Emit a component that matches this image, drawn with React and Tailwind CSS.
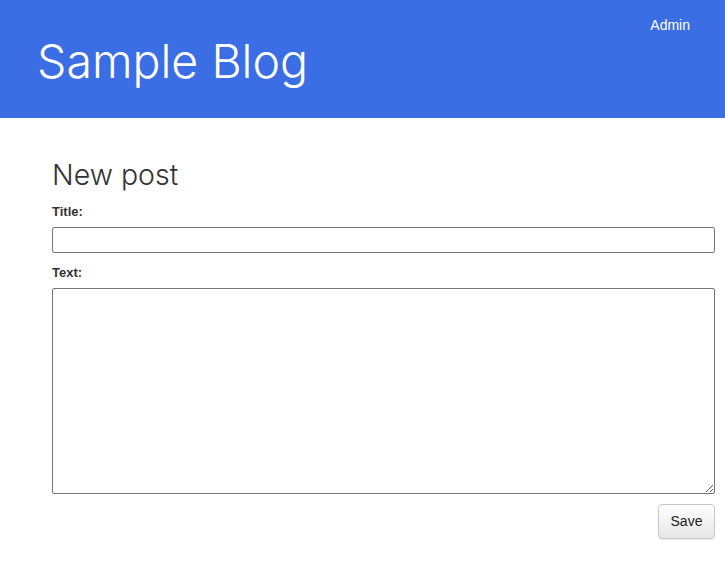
export default function App() {
  return (
    <div className="min-h-[573px] bg-white" style={{ fontFamily: '"Liberation Sans", Arial, sans-serif' }}>
      <header className="relative h-[118px] bg-[#3b6de4]">
        <h1 className="absolute left-[37px] top-[33px] text-[46.5px] font-light leading-[56px] text-white" style={{ fontFamily: 'Inter, sans-serif' }}>
          Sample Blog
        </h1>
        <a className="absolute right-[35px] top-[16px] text-[14px] leading-[18px] text-white">Admin</a>
      </header>
      <main className="pl-[52px] pr-[10px]">
        <h2 className="pt-[39px] text-[28.5px] font-light leading-[36px] text-[#333]" style={{ fontFamily: 'Inter, sans-serif' }}>
          New post
        </h2>
        <form className="flex flex-col">
          <label className="mt-[11px] text-[13px] font-bold leading-[16px] text-[#333]">Title:</label>
          <input type="text" className="mt-[7px] h-[26px] w-full rounded-[2px] border border-[#767676] px-1 text-[13px]" />
          <label className="mt-[12px] text-[13px] font-bold leading-[16px] text-[#333]">Text:</label>
          <textarea className="mt-[7px] h-[206px] w-full rounded-[2px] border border-[#767676] p-1 text-[13px]" />
          <div className="mt-[10px] flex justify-end">
            <button type="button" className="h-[35px] w-[57px] rounded-[4px] border border-[#c8c8c8] bg-gradient-to-b from-[#ffffff] to-[#e6e6e6] text-[14px] text-[#222] shadow-[0_1px_1px_rgba(0,0,0,0.08)]">
              Save
            </button>
          </div>
        </form>
      </main>
    </div>
  );
}
